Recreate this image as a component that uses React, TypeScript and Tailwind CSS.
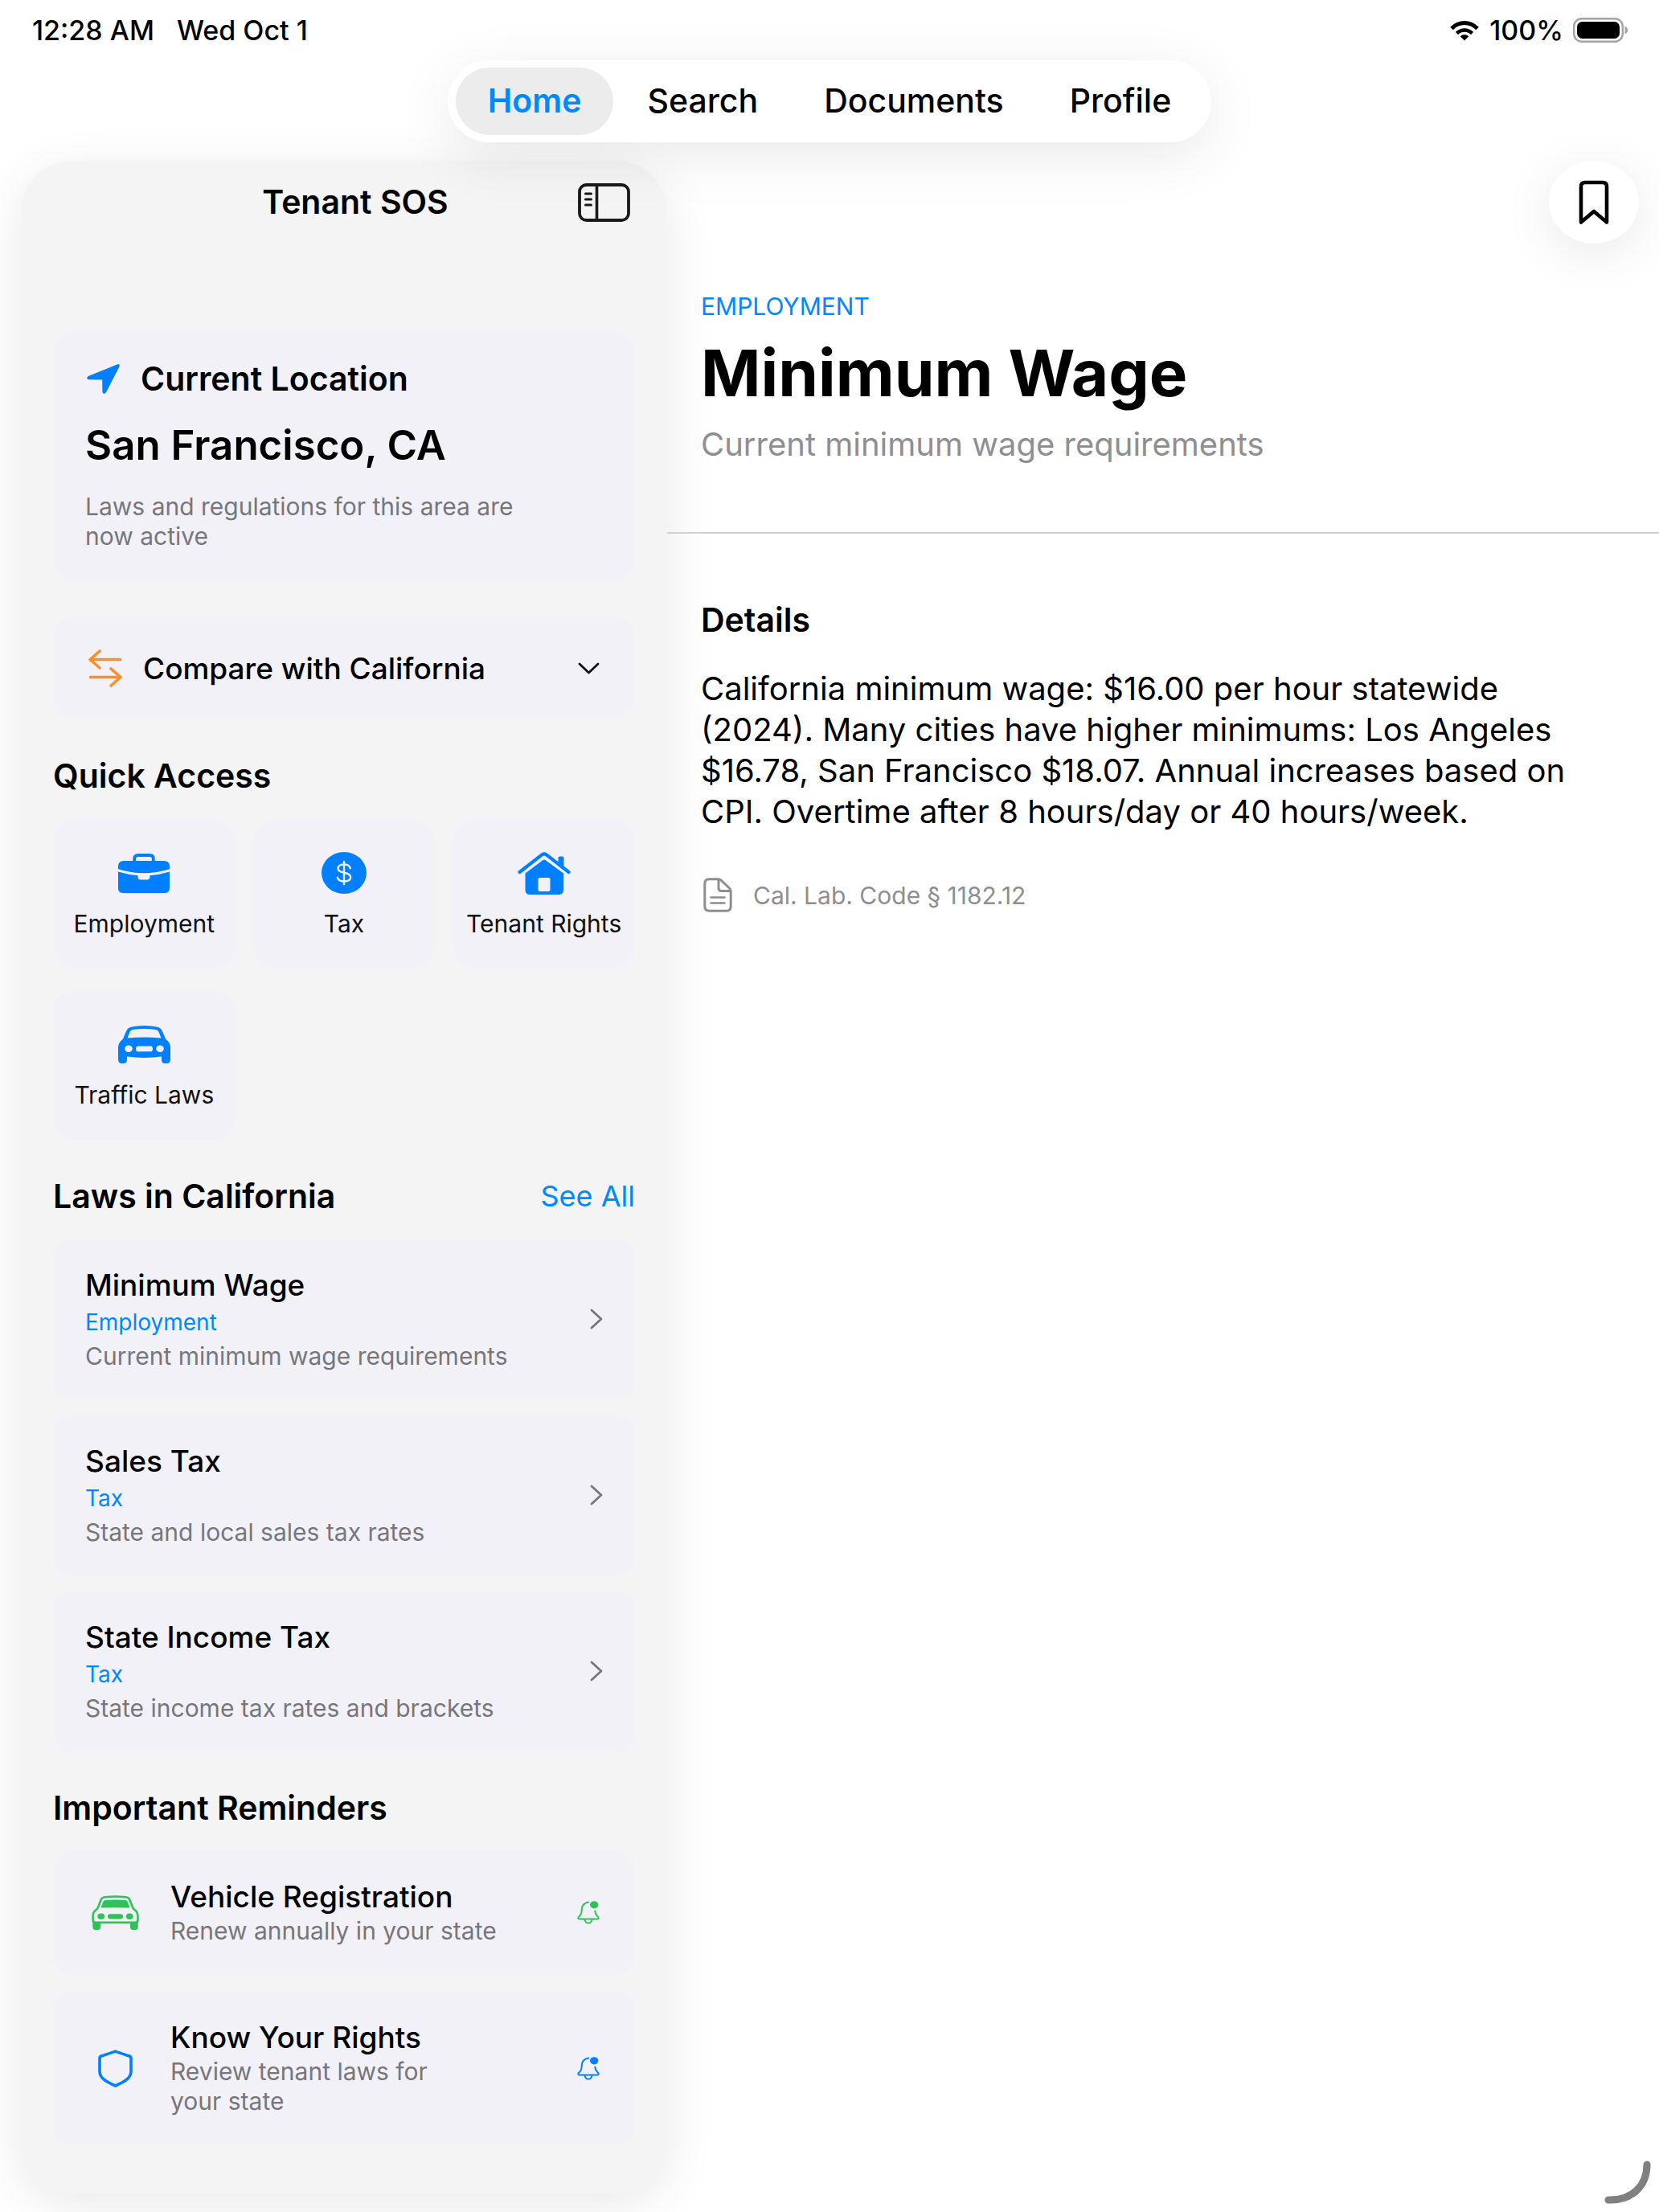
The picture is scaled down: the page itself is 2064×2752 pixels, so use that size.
import React from "react";

type IconProps = { className?: string };

function WifiIcon() {
  return (
    <svg width="38" height="26" viewBox="0 0 38 26" aria-hidden="true">
      <path d="M3 10.5 C12 1.2 26 1.2 35 10.5" fill="none" stroke="#000" strokeWidth="5" />
      <path d="M9.5 16.5 C15 11.2 23 11.2 28.500 16.500" fill="none" stroke="#000" strokeWidth="4.600" />
      <path d="M19 25.500 L13.800 20.200 C16.500 17.600 21.500 17.600 24.200 20.200 Z" fill="#000" />
    </svg>
  );
}

function BatteryIcon() {
  return (
    <svg width="69" height="31" viewBox="0 0 69 31" aria-hidden="true">
      <rect x="1.200" y="1.200" width="60.600" height="28.600" rx="9.500" fill="none" stroke="#a3a3a3" strokeWidth="2.400" />
      <rect x="5" y="5" width="53" height="21" rx="6.500" fill="#000" />
      <path d="M64.500 10.500 C69.300 12.500 69.300 18.500 64.500 20.500 Z" fill="#a3a3a3" />
    </svg>
  );
}

function SidebarIcon() {
  return (
    <svg width="65" height="48" viewBox="0 0 65 48" fill="none" stroke="#1a1a1a" aria-hidden="true">
      <rect x="2" y="2" width="61" height="44" rx="8.500" strokeWidth="3.800" />
      <path d="M23.500 2 V46" strokeWidth="3.600" />
      <path d="M9.500 13 H16.500 M9.500 20 H16.500 M9.500 27 H16.500" strokeWidth="3" strokeLinecap="round" />
    </svg>
  );
}

function BookmarkIcon() {
  return (
    <svg width="38" height="56" viewBox="0 0 38 56" fill="none" stroke="#000" strokeWidth="4.600" strokeLinejoin="round" aria-hidden="true">
      <path d="M3 52.500 V8 Q3 3 8 3 H30 Q35 3 35 8 V52.500 L19 39 Z" />
    </svg>
  );
}

function LocationIcon() {
  return (
    <svg width="41" height="37" viewBox="0 0 41 37" fill="#0080ff" stroke="#0080ff" strokeWidth="2" strokeLinejoin="round" aria-hidden="true">
      <path d="M38.500 1.200 L2.200 16 Q0.200 17.600 2.400 18.200 L19 18.400 Q20.200 18.500 20.200 19.600 L20.400 34.400 Q21.200 36.800 23 34.800 L39.700 2.600 Q40.200 0.700 38.500 1.200 Z" />
    </svg>
  );
}

function CompareIcon() {
  return (
    <svg width="42" height="47" viewBox="0 0 42 47" fill="none" stroke="#ff8d28" strokeWidth="3.600" strokeLinecap="round" strokeLinejoin="round" aria-hidden="true">
      <path d="M14 2 L2 12.500 L14 23 M2 12.500 H39.500" />
      <path d="M28 24 L40 34.500 L28 45 M40 34.500 H2.500" />
    </svg>
  );
}

function ChevronDown() {
  return (
    <svg width="27" height="15" viewBox="0 0 27 15" fill="none" stroke="#111" strokeWidth="2.800" strokeLinecap="round" strokeLinejoin="round" aria-hidden="true">
      <path d="M2 2 L13.500 13 L25 2" />
    </svg>
  );
}

function ChevronRight() {
  return (
    <svg width="16" height="26" viewBox="0 0 16 26" fill="none" stroke="#77777b" strokeWidth="2.800" strokeLinecap="round" strokeLinejoin="round" aria-hidden="true">
      <path d="M2 2 L14 13 L2 24" />
    </svg>
  );
}

function BriefcaseIcon() {
  return (
    <svg width="64" height="49" viewBox="0 0 64 49" fill="#0080ff" aria-hidden="true">
      <path d="M20.200 11 V6.500 Q20.200 2 24.700 2 H39.300 Q43.800 2 43.800 6.500 V11" fill="none" stroke="#0080ff" strokeWidth="3.800" />
      <path d="M7 9 H57 Q64 9 64 16 V19.200 Q48 24.300 32 24.300 Q16 24.300 0 19.200 V16 Q0 9 7 9 Z" />
      <path d="M0 22.600 Q12 26.300 24.600 27.200 V29 Q24.600 32.500 28 32.500 H36 Q39.400 32.500 39.400 29 V27.200 Q52 26.300 64 22.600 V43 Q64 49 57.500 49 H6.500 Q0 49 0 43 Z" />
    </svg>
  );
}

function DollarIcon() {
  return (
    <svg width="56" height="52" viewBox="0 0 56 52" fill="none" aria-hidden="true">
      <ellipse cx="28" cy="26" rx="28" ry="26" fill="#0080ff" />
      <path d="M28 12 V40 M35.800 20.200 C35 17 32 15.400 28 15.400 C23.500 15.400 20.500 17.500 20.500 20.600 C20.500 23.600 22.800 24.800 28 25.800 C33.500 26.900 36.200 28.200 36.200 31.300 C36.200 34.600 33 36.600 28 36.600 C23.500 36.600 20.500 34.800 19.800 31.600" stroke="#f2f1f7" strokeWidth="2.400" strokeLinecap="round" />
    </svg>
  );
}

function HouseIcon() {
  return (
    <svg width="66" height="53" viewBox="0 0 66 53" fill="none" aria-hidden="true">
      <path d="M2.500 25 L30.500 3.200 Q33 1.400 35.500 3.200 L63.500 25" stroke="#0080ff" strokeWidth="4.200" strokeLinecap="round" />
      <path d="M50.500 15 V7.500 Q50.500 5.500 52.500 5.500 H55.500 Q57.500 5.500 57.500 7.500 V21 Z" fill="#0080ff" />
      <path d="M9.500 26.500 L31.500 10 Q33 9 34.500 10 L57 26.500 V47 Q57 53 51 53 H15.500 Q9.500 53 9.500 47 Z" fill="#0080ff" />
      <rect x="25.500" y="32" width="15" height="17" rx="2" fill="#f2f1f7" />
    </svg>
  );
}

function CarIcon() {
  return (
    <svg width="65" height="47" viewBox="0 0 65 47" aria-hidden="true">
      <path
        fill="#0080ff"
        fillRule="evenodd"
        d="M17 1.500 Q24 0 32.500 0 Q41 0 48 1.500 Q53 2.300 55 7 L59 16.500 Q65 21.500 65 27 V42 Q65 47 60.500 47 H58.500 Q54 47 54 42.500 V38.600 Q43 40 32.500 40 Q22 40 11 38.600 V42.500 Q11 47 6.500 47 H4.500 Q0 47 0 42 V27 Q0 21.500 6 16.500 L10 7 Q12 2.300 17 1.500 Z M18 5 Q15.500 5.400 14.500 8 L11.500 15.500 Q21.500 14.600 32.500 14.600 Q43.500 14.600 53.500 15.500 L50.500 8 Q49.500 5.400 47 5 Q40 4 32.500 4 Q25 4 18 5 Z M13 24.600 A4.800 4.200 0 1 0 13 33 A4.800 4.200 0 1 0 13 24.600 Z M52 24.600 A4.800 4.200 0 1 0 52 33 A4.800 4.200 0 1 0 52 24.600 Z M25 25.500 Q22 25.500 22 28.900 Q22 32.300 25 32.300 H40 Q43 32.300 43 28.900 Q43 25.500 40 25.500 Z"
      />
    </svg>
  );
}

function CarOutlineIcon() {
  return (
    <svg width="59" height="43" viewBox="0 0 59 43" aria-hidden="true">
      <path d="M4.800 33.800 Q1.600 33.800 1.600 30.800 V26 Q1.600 21 5 18.500 Q7.200 17 8.200 14.500 L11.200 6.500 Q12.500 2.600 16.500 2.200 Q29.500 0.900 42.500 2.200 Q46.500 2.600 47.800 6.500 L50.800 14.500 Q51.800 17 54 18.500 Q57.400 21 57.400 26 V30.800 Q57.400 33.800 54.200 33.800 Z" fill="none" stroke="#2fc255" strokeWidth="2.600" />
      <path d="M1.300 31 Q1.300 34 5 34.300 H11 V39.500 Q11 43 7.500 43 H4.800 Q1.300 43 1.300 39.500 Z M57.700 31 Q57.700 34 54 34.300 H48 V39.500 Q48 43 51.500 43 H54.200 Q57.700 43 57.700 39.500 Z" fill="#2fc255" />
      <path d="M17 6 Q29.500 4.800 42 6 Q44 6.200 44.700 8.200 L47 14 Q47.500 15.700 45.700 15.600 Q29.500 14.900 13.300 15.600 Q11.500 15.700 12 14 L14.300 8.200 Q15 6.200 17 6 Z" fill="#2fc255" />
      <ellipse cx="11.800" cy="26.300" rx="4.400" ry="3.700" fill="#2fc255" />
      <ellipse cx="47.200" cy="26.300" rx="4.400" ry="3.700" fill="#2fc255" />
      <rect x="20" y="23.200" width="19" height="6.200" rx="3.100" fill="#2fc255" />
    </svg>
  );
}

function ShieldIcon() {
  return (
    <svg width="43" height="47" viewBox="0 0 43 47" fill="none" stroke="#0080ff" strokeWidth="3.600" strokeLinejoin="round" aria-hidden="true">
      <path d="M21.500 2 Q23 2.800 39 8 Q41 8.800 41 10.800 V27 C41 35 34 39.500 21.500 45 C9 39.500 2 35 2 27 V10.800 Q2 8.800 4 8 Q20 2.800 21.500 2 Z" />
    </svg>
  );
}

function BellIcon({ className }: IconProps) {
  return (
    <svg width="28" height="29" viewBox="0 0 28 29" fill="none" stroke="currentColor" strokeWidth="2" strokeLinecap="round" strokeLinejoin="round" className={className} aria-hidden="true">
      <path d="M14 1.500 C8.500 2.600 6 6 5.800 10.500 C5.600 16 4.600 17.500 1.800 20 Q0.400 22.400 2.600 22.400 H25.400 Q27.600 22.400 26.200 20 C23.400 17.500 22.600 16 22.300 12.500" />
      <path d="M9.500 23 Q10 27.600 14 27.600 Q18 27.600 18.500 23" />
      <ellipse cx="21.200" cy="4.800" rx="5.200" ry="4.600" fill="currentColor" stroke="none" />
    </svg>
  );
}

function DocumentIcon() {
  return (
    <svg width="36" height="43" viewBox="0 0 36 43" fill="none" stroke="#8e8e93" strokeWidth="3" strokeLinejoin="round" strokeLinecap="round" aria-hidden="true">
      <path d="M7.500 1.800 H18.500 Q20.500 1.800 22 3.200 L32.500 13 Q34.200 14.800 34.200 17 V35.500 Q34.200 41.200 28.500 41.200 H7.500 Q1.800 41.200 1.800 35.500 V7.500 Q1.800 1.800 7.500 1.800 Z" />
      <path d="M19 2.500 V13 Q19 16.500 22.500 16.500 H33.500" />
      <path d="M9.500 24.500 H26.500 M9.500 31.500 H26.500" strokeWidth="2.600" />
    </svg>
  );
}

const tabs = ["Home", "Search", "Documents", "Profile"];

const quickAccess = [
  { label: "Employment", Icon: BriefcaseIcon },
  { label: "Tax", Icon: DollarIcon },
  { label: "Tenant Rights", Icon: HouseIcon },
  { label: "Traffic Laws", Icon: CarIcon },
];

const laws = [
  { title: "Minimum Wage", tag: "Employment", text: "Current minimum wage requirements" },
  { title: "Sales Tax", tag: "Tax", text: "State and local sales tax rates" },
  { title: "State Income Tax", tag: "Tax", text: "State income tax rates and brackets" },
];

const reminders = [
  { title: "Vehicle Registration", text: "Renew annually in your state", Icon: CarOutlineIcon, bell: "text-[#2fc255]" },
  { title: "Know Your Rights", text: "Review tenant laws for your\u00a0state", Icon: ShieldIcon, bell: "text-[#0080ff]" },
];

function StatusBar() {
  return (
    <header className="flex h-[75px] items-center justify-between pr-[38px] pl-10 text-[34px] font-medium">
      <div className="flex gap-7">
        <span>12:28 AM</span>
        <span>Wed Oct 1</span>
      </div>
      <div className="flex items-center gap-3">
        <WifiIcon />
        <span>100%</span>
        <BatteryIcon />
      </div>
    </header>
  );
}

function TabBar() {
  return (
    <nav className="relative z-10 flex gap-0.5 self-center rounded-full bg-white px-2.5 py-[9px] shadow-[0_16px_72px_rgba(0,0,0,0.09)]">
      {tabs.map((tab) => (
        <button
          key={tab}
          type="button"
          className={
            tab === "Home"
              ? "h-[84px] rounded-full bg-[#ececec] px-10 text-[41px] font-semibold text-[#0088ff]"
              : "h-[84px] rounded-full px-10 text-[41px] font-medium"
          }
        >
          {tab}
        </button>
      ))}
    </nav>
  );
}

function Sidebar() {
  return (
    <aside className="flex w-[804px] shrink-0 flex-col rounded-[64px] bg-[#f4f4f4] pb-[60px] shadow-[0_14px_64px_rgba(0,0,0,0.09)]">
      <div className="grid h-[104px] grid-cols-[1fr_auto_1fr] items-center pr-[46px] pl-[74px]">
        <h1 className="col-start-2 text-[41px] font-semibold">Tenant SOS</h1>
        <button type="button" aria-label="Toggle sidebar" className="justify-self-end">
          <SidebarIcon />
        </button>
      </div>

      <div className="flex flex-col gap-[46px] px-10 pt-[107px]">
        <section className="rounded-[28px] bg-[#f2f1f7] px-10 py-9">
          <h2 className="flex items-center gap-[26px] pl-0.5 text-[41px] leading-[48px] font-semibold">
            <LocationIcon />
            Current Location
          </h2>
          <p className="mt-6 text-[51px] leading-[70px] font-semibold">San Francisco, CA</p>
          <p className="mt-[23px] max-w-[560px] text-[30px] leading-[37px] text-[#77777b]">
            Laws and regulations for this area are now active
          </p>
        </section>

        <button type="button" className="flex h-[127px] items-center rounded-[28px] bg-[#f2f1f7] pr-11 pl-11">
          <CompareIcon />
          <span className="ml-[26px] flex-1 text-left text-[37px] font-medium">Compare with California</span>
          <ChevronDown />
        </button>

        <section>
          <h2 className="mb-[29px] text-[41px] leading-[48px] font-semibold">Quick Access</h2>
          <div className="grid grid-cols-3 gap-x-[22px] gap-y-[26px]">
            {quickAccess.map(({ label, Icon }) => (
              <button key={label} type="button" className="flex flex-col items-center gap-[17px] rounded-[28px] bg-[#f2f1f7] pt-10 pb-[38px]">
                <span className="flex h-14 items-center">
                  <Icon />
                </span>
                <span className="text-[30px] leading-9 whitespace-nowrap text-[#111]">{label}</span>
              </button>
            ))}
          </div>
        </section>

        <section>
          <div className="mb-[29px] flex items-center justify-between">
            <h2 className="text-[41px] leading-[48px] font-semibold">Laws in California</h2>
            <a href="#all-laws" className="text-[36px] leading-[48px] text-[#0088ff]">
              See All
            </a>
          </div>
          <div className="flex flex-col gap-[19px]">
            {laws.map((law) => (
              <button key={law.title} type="button" className="flex items-center justify-between rounded-[24px] bg-[#f2f1f7] py-9 pr-10 pl-10 text-left">
                <span className="flex flex-col gap-2">
                  <span className="text-[37px] leading-[44px] font-medium">{law.title}</span>
                  <span className="text-[28px] leading-8 text-[#0088ff]">{law.tag}</span>
                  <span className="text-[30px] leading-9 text-[#77777b]">{law.text}</span>
                </span>
                <ChevronRight />
              </button>
            ))}
          </div>
        </section>

        <section>
          <h2 className="mb-[29px] text-[41px] leading-[48px] font-semibold">Important Reminders</h2>
          <div className="flex flex-col gap-5">
            {reminders.map(({ title, text, Icon, bell }) => (
              <article key={title} className="flex items-center rounded-[24px] bg-[#f2f1f7] py-9 pr-11 pl-[42px]">
                <span className="flex w-[70px] justify-center">
                  <Icon />
                </span>
                <div className="ml-[34px] w-[430px]">
                  <h3 className="text-[37px] leading-[44px] font-medium">{title}</h3>
                  <p className="mt-0.5 text-[30px] leading-[37px] text-[#77777b]">{text}</p>
                </div>
                <button type="button" aria-label={`Notify me: ${title}`} className="ml-auto">
                  <BellIcon className={bell} />
                </button>
              </article>
            ))}
          </div>
        </section>
      </div>
    </aside>
  );
}

function Detail() {
  return (
    <main className="min-w-0 flex-1">
      <div className="flex h-[103px] justify-end pr-[25px]">
        <button
          type="button"
          aria-label="Bookmark"
          className="flex h-[103px] w-28 items-center justify-center rounded-[50%] bg-white shadow-[0_12px_64px_rgba(0,0,0,0.09)]"
        >
          <BookmarkIcon />
        </button>
      </div>

      <div className="border-b-2 border-[#d2d2d4] px-[42px] pt-[58px] pb-[84px]">
        <p className="text-[30px] leading-10 text-[#0088ff]">EMPLOYMENT</p>
        <h1 className="mt-[17px] text-[80px] leading-[92px] font-bold">Minimum Wage</h1>
        <p className="mt-[18px] text-[40px] leading-[50px] text-[#8e8e93]">Current minimum wage requirements</p>
      </div>

      <div className="px-[42px] pt-[83px]">
        <h2 className="text-[41px] leading-[48px] font-semibold">Details</h2>
        <p className="mt-9 max-w-[1120px] text-[40px] leading-[51px]">
          California minimum wage: $16.00 per hour statewide (2024). Many cities have higher minimums: Los Angeles $16.78, San
          Francisco $18.07. Annual increases based on CPI. Overtime after 8 hours/day or 40 hours/week.
        </p>
        <p className="mt-[57px] flex items-center gap-[26px] pl-[3px] text-[30px] leading-10 text-[#8e8e93]">
          <DocumentIcon />
          Cal. Lab. Code § 1182.12
        </p>
      </div>
    </main>
  );
}

export default function App() {
  return (
    <div className="relative flex min-h-screen flex-col overflow-hidden bg-white font-['Inter',sans-serif] text-black">
      <StatusBar />
      <TabBar />
      <div className="mt-[23px] flex flex-1 items-start pl-[26px]">
        <Sidebar />
        <Detail />
      </div>
      <svg className="absolute right-2.5 bottom-2.5" width="58" height="54" viewBox="0 0 58 54" fill="none" aria-hidden="true">
        <path d="M5 49 H8 C34 49 53 32 53 5" stroke="#808080" strokeWidth="9" strokeLinecap="round" />
      </svg>
    </div>
  );
}
